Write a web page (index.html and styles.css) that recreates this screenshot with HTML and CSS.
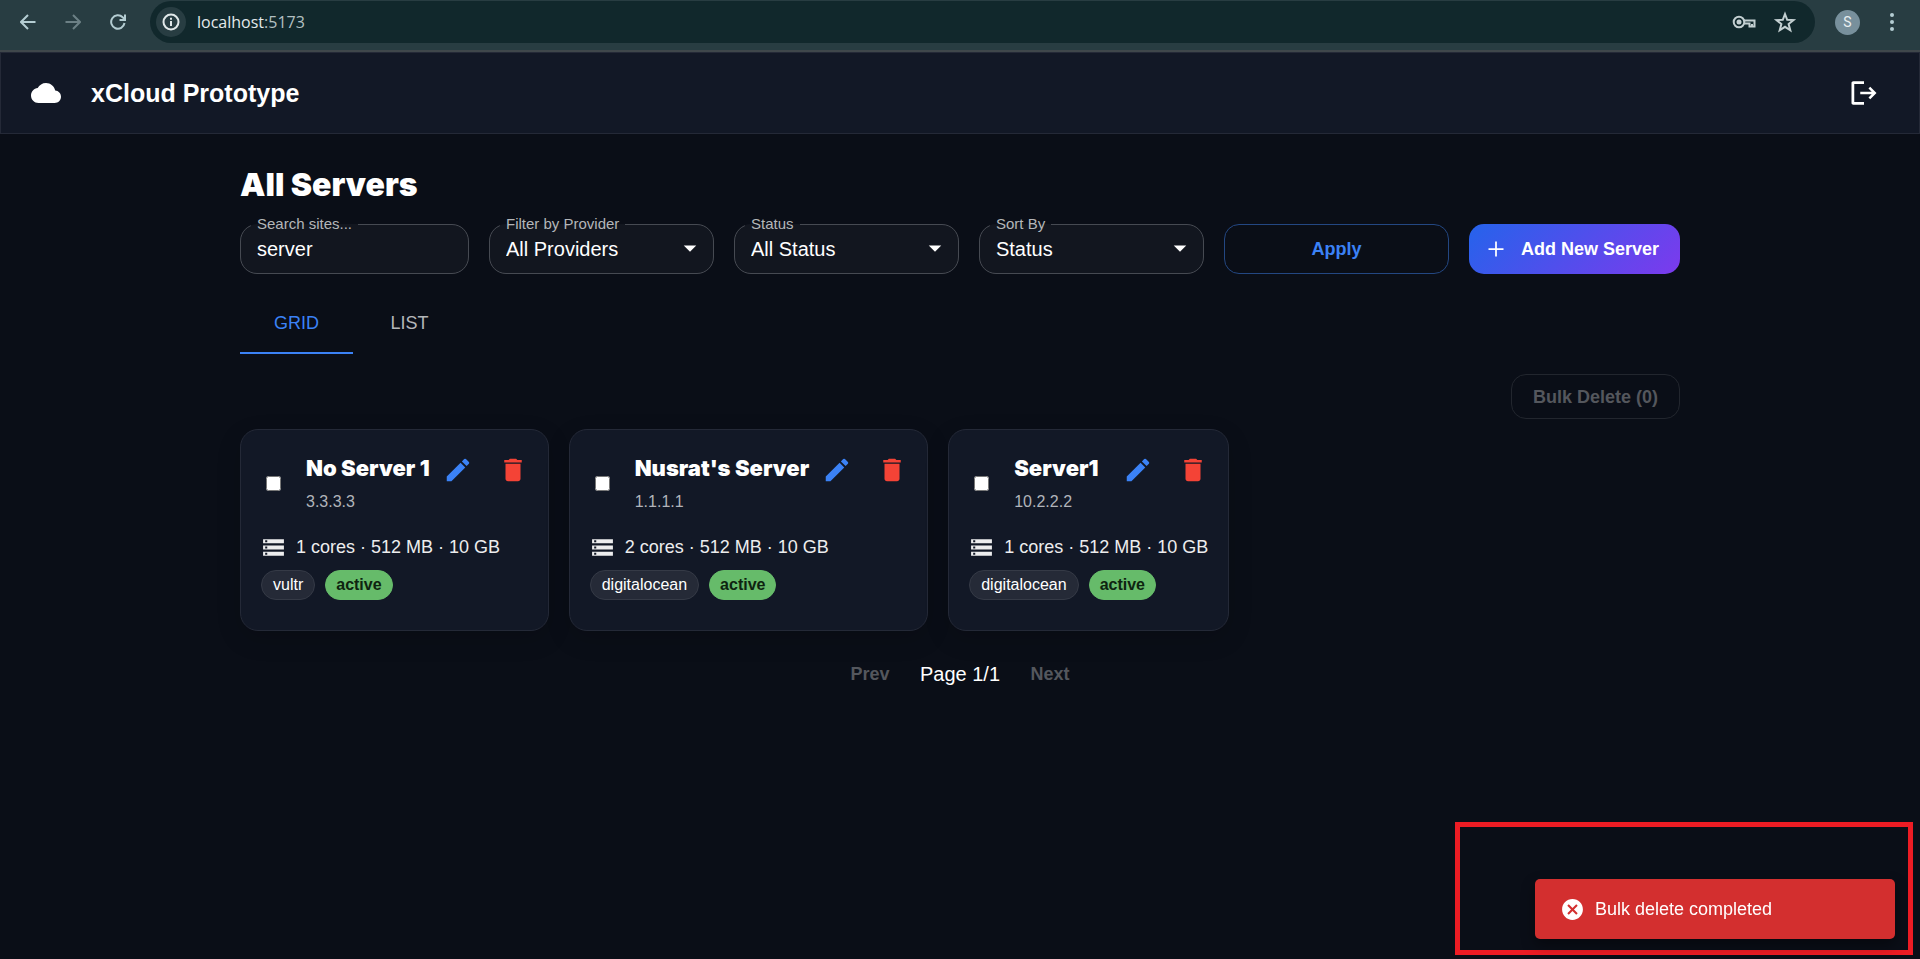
FILE: index.html
```html
<!DOCTYPE html>
<html lang="en">
<head>
<meta charset="utf-8">
<meta name="viewport" content="width=device-width, initial-scale=1">
<title>xCloud Prototype</title>
<link rel="stylesheet" href="styles.css">
</head>
<body>
<svg class="sprite" aria-hidden="true">
  <symbol id="edit" viewBox="0 0 24 24"><path d="M3 17.25V21h3.75L17.81 9.94l-3.75-3.75zM20.71 7.04c.39-.39.39-1.02 0-1.41l-2.34-2.34a.9959.9959 0 0 0-1.41 0l-1.83 1.83 3.75 3.75z"/></symbol>
  <symbol id="trash" viewBox="0 0 24 24"><path d="M6 19c0 1.100.9 2 2 2h8c1.100 0 2-.9 2-2V7H6zM19 4h-3.500l-1-1h-5l-1 1H5v2h14z"/></symbol>
  <symbol id="storage" viewBox="0 0 24 24"><path d="M2 20h20v-4H2zm2-3h2v2H4zM2 4v4h20V4zm4 3H4V5h2zm-4 7h20v-4H2zm2-3h2v2H4z"/></symbol>
  <symbol id="caret" viewBox="0 0 24 24"><path d="m7 10 5 5 5-5z"/></symbol>
</svg>

<div class="browser">
  <button class="nav" aria-label="Back"><svg viewBox="0 0 16 16"><path d="M15.500 8H1.500M8 1 1 8l7 7"/></svg></button>
  <button class="nav nav-off" aria-label="Forward" disabled><svg viewBox="0 0 16 16"><path d="M.5 8h14M8 1l7 7-7 7"/></svg></button>
  <button class="nav" aria-label="Reload"><svg viewBox="0 0 16 16"><path d="M14.500 9A6.700 6.700 0 1 1 12.700 3.300L15 5.500M15 .5v5.500H9.500"/></svg></button>
  <div class="omnibox">
    <button class="site-info" aria-label="Site information"><svg viewBox="0 0 18 18"><circle cx="9" cy="9" r="7.500"/><path d="M9 8v5M9 4.800v2"/></svg></button>
    <div class="url">localhost<span>:5173</span></div>
    <button class="tool" aria-label="Passwords"><svg viewBox="0 0 24 16"><circle cx="7" cy="8" r="5.300"/><circle class="solid" cx="7" cy="8" r="2.500"/><path d="M11.500 6.500H22.500v6h-5v-3h-5.500M20 12.500v-2.500"/></svg></button>
    <button class="tool" aria-label="Bookmark"><svg viewBox="0 0 24 24"><path d="m12 4 2.200 5.800 6.300.3-4.900 4 1.700 6.200L12 16.800 6.700 20.300l1.700-6.200-4.900-4 6.300-.3z"/></svg></button>
  </div>
  <button class="profile" aria-label="Profile">S</button>
  <button class="menu" aria-label="Menu"><svg viewBox="0 0 6 20"><circle cx="3" cy="3" r="2"/><circle cx="3" cy="10" r="2"/><circle cx="3" cy="17" r="2"/></svg></button>
</div>

<header class="appbar">
  <svg class="icon" viewBox="0 0 24 24"><path d="M19.350 10.040C18.670 6.590 15.640 4 12 4 9.110 4 6.600 5.640 5.350 8.040 2.340 8.360 0 10.910 0 14c0 3.310 2.690 6 6 6h13c2.760 0 5-2.240 5-5 0-2.640-2.050-4.780-4.650-4.960"/></svg>
  <h1>xCloud Prototype</h1>
  <button class="icon-btn" aria-label="Log out"><svg class="icon" viewBox="0 0 24 24"><path d="m17 7-1.410 1.410L18.170 11H9v2h9.170l-2.580 2.580L17 17l5-5zM4.200 4.800H12V2.600H3.500C2.600 2.600 2 3.200 2 4v16c0 .8.600 1.400 1.500 1.400H12v-2.200H4.200z"/></svg></button>
</header>

<main class="content">
  <h2 class="black">All Servers</h2>
  <form class="filters">
    <fieldset class="field search"><legend><label for="search">Search sites...</label></legend><input id="search" type="text" value="server"></fieldset>
    <fieldset class="field"><legend><label for="provider">Filter by Provider</label></legend><select id="provider"><option>All Providers</option></select><svg class="icon caret"><use href="#caret"/></svg></fieldset>
    <fieldset class="field"><legend><label for="status">Status</label></legend><select id="status"><option>All Status</option></select><svg class="icon caret"><use href="#caret"/></svg></fieldset>
    <fieldset class="field"><legend><label for="sort">Sort By</label></legend><select id="sort"><option>Status</option></select><svg class="icon caret"><use href="#caret"/></svg></fieldset>
    <button type="button" class="btn apply">Apply</button>
    <button type="button" class="btn add"><svg class="icon" viewBox="0 0 24 24"><path d="M18 12.700h-5.300V18h-1.400v-5.300H6v-1.400h5.300V6h1.400v5.300H18z"/></svg>Add New Server</button>
  </form>

  <div class="tabs" role="tablist">
    <button class="tab tab-on" role="tab" aria-selected="true">GRID</button>
    <button class="tab" role="tab" aria-selected="false">LIST</button>
  </div>

  <button class="btn bulk" disabled>Bulk Delete (0)</button>

  <section class="cards">
    <article class="card">
      <div class="card-head">
        <input type="checkbox" aria-label="Select No Server 1">
        <div class="card-title"><h3 class="black">No Server 1</h3><p>3.3.3.3</p></div>
        <div class="actions">
          <button class="icon-btn edit" aria-label="Edit"><svg class="icon"><use href="#edit"/></svg></button>
          <button class="icon-btn delete" aria-label="Delete"><svg class="icon"><use href="#trash"/></svg></button>
        </div>
      </div>
      <p class="specs"><svg class="icon"><use href="#storage"/></svg>1 cores · 512 MB · 10 GB</p>
      <div class="chips"><span class="chip">vultr</span><span class="chip active">active</span></div>
    </article>
    <article class="card">
      <div class="card-head">
        <input type="checkbox" aria-label="Select Nusrat's Server">
        <div class="card-title"><h3 class="black">Nusrat's Server</h3><p>1.1.1.1</p></div>
        <div class="actions">
          <button class="icon-btn edit" aria-label="Edit"><svg class="icon"><use href="#edit"/></svg></button>
          <button class="icon-btn delete" aria-label="Delete"><svg class="icon"><use href="#trash"/></svg></button>
        </div>
      </div>
      <p class="specs"><svg class="icon"><use href="#storage"/></svg>2 cores · 512 MB · 10 GB</p>
      <div class="chips"><span class="chip">digitalocean</span><span class="chip active">active</span></div>
    </article>
    <article class="card">
      <div class="card-head">
        <input type="checkbox" aria-label="Select Server1">
        <div class="card-title"><h3 class="black">Server1</h3><p>10.2.2.2</p></div>
        <div class="actions">
          <button class="icon-btn edit" aria-label="Edit"><svg class="icon"><use href="#edit"/></svg></button>
          <button class="icon-btn delete" aria-label="Delete"><svg class="icon"><use href="#trash"/></svg></button>
        </div>
      </div>
      <p class="specs"><svg class="icon"><use href="#storage"/></svg>1 cores · 512 MB · 10 GB</p>
      <div class="chips"><span class="chip">digitalocean</span><span class="chip active">active</span></div>
    </article>
  </section>

  <nav class="pager">
    <button class="btn" disabled>Prev</button>
    <span>Page 1/1</span>
    <button class="btn" disabled>Next</button>
  </nav>
</main>

<div class="highlight"></div>
<div class="toast" role="alert">
  <svg class="icon" viewBox="0 0 24 24"><path d="M12 2C6.470 2 2 6.470 2 12s4.470 10 10 10 10-4.470 10-10S17.530 2 12 2m5 13.590L15.590 17 12 13.410 8.410 17 7 15.590 10.590 12 7 8.410 8.410 7 12 10.590 15.590 7 17 8.410 13.410 12z"/></svg>
  Bulk delete completed
</div>
</body>
</html>
```

FILE: styles.css
```css
* { box-sizing: border-box; }

body {
  margin: 0;
  min-height: 100vh;
  background: #0a0e17;
  color: #fff;
  font-family: "Liberation Sans", Arial, sans-serif;
  font-size: 20px;
  line-height: 30px;
}

h1, h2, h3, p { margin: 0; }

button {
  padding: 0;
  border: 0;
  background: none;
  color: inherit;
  font: inherit;
}

.sprite { display: none; }

.icon {
  display: block;
  flex: none;
  width: 30px;
  height: 30px;
  fill: currentColor;
}

.black {
  font-family: Inter, "Liberation Sans", sans-serif;
  font-weight: 900;
}

/* Browser toolbar */
.browser {
  display: flex;
  align-items: center;
  height: 52px;
  padding: 1px 25px 7px 20px;
  background: #283d42;
  border-bottom: 2px solid #3f474b;
}

.browser svg {
  display: block;
  fill: none;
  stroke: currentColor;
  stroke-width: 2;
}

.nav {
  width: 16px;
  margin-right: 29px;
  color: #b4cdd2;
}

.nav svg { width: 16px; height: 16px; }
.nav-off { color: #6c8085; }

.omnibox {
  display: flex;
  flex: 1;
  align-items: center;
  height: 42px;
  margin-right: 20px;
  margin-left: -5px;
  padding: 0 18px 0 6px;
  border-radius: 21px;
  background: #11282c;
  color: #c3cfd1;
}

.site-info {
  display: grid;
  place-items: center;
  width: 30px;
  height: 30px;
  border-radius: 50%;
  background: #283d42;
  color: #e1e8e9;
}

.site-info svg { width: 18px; height: 18px; }

.url {
  flex: 1;
  margin-left: 11px;
  color: #e4eaeb;
  font-family: "Open Sans", "Noto Sans", sans-serif;
  font-size: 16px;
  line-height: 24px;
}

.url span { color: #b3c0c2; }

.tool { margin-left: 17px; }
.tool svg { width: 24px; height: 24px; }

.browser .solid { fill: currentColor; stroke: none; }

.profile {
  width: 25px;
  height: 25px;
  border-radius: 50%;
  background: #78909c;
  color: #e9eef0;
  font-family: Roboto, sans-serif;
  font-size: 14px;
  line-height: 25px;
}

.menu { margin-left: 29px; color: #b4cdd2; }
.browser .menu svg { width: 6px; height: 20px; fill: currentColor; stroke: none; }

/* Application bar */
.appbar {
  display: flex;
  align-items: center;
  gap: 30px;
  padding: 15px 30px;
  border: 1px solid #242937;
  background: #121826;
}

.appbar h1 {
  flex: 1;
  font-size: 25px;
  line-height: 30px;
}

.icon-btn { padding: 10px; }

/* Page content */
.content {
  display: flex;
  flex-direction: column;
  max-width: 1500px;
  margin: 0 auto;
  padding: 30px;
}

.content h2 {
  font-size: 32px;
  line-height: 42px;
}

.filters {
  display: flex;
  align-items: flex-end;
  gap: 20px;
  margin-top: 8px;
}

.field {
  position: relative;
  flex: 1 1 225px;
  min-width: 0;
  height: 60px;
  margin: 0;
  padding: 0 10px;
  border: 1px solid #464a52;
  border-radius: 17px;
  background: #12161f;
}

.search { flex-basis: 229px; }

.field legend {
  padding: 0 6px;
  color: #b4b6b9;
  font-size: 15px;
  line-height: 20px;
}

.field label { display: block; }

.field input,
.field select {
  display: block;
  width: 100%;
  height: 30px;
  padding: 0 6px;
  border: 0;
  outline: 0;
  background: transparent;
  color: #fff;
  font: inherit;
  appearance: none;
}

.field .caret {
  position: absolute;
  right: 8px;
  bottom: 10px;
  pointer-events: none;
}

.btn {
  height: 45px;
  min-width: 80px;
  border-radius: 15px;
  font-size: 18px;
  font-weight: 700;
}

.btn:disabled { color: #54575d; }

.apply {
  flex: 1 1 225px;
  height: 50px;
  border: 1px solid #234782;
  color: #3b82f6;
}

.add {
  display: flex;
  flex: none;
  align-items: center;
  gap: 10px;
  height: 50px;
  padding: 0 21px 0 12px;
  background: linear-gradient(135deg, #2563eb, #7c3aed);
  white-space: nowrap;
}

.tabs {
  display: flex;
  margin-top: 20px;
}

.tab {
  width: 113px;
  height: 60px;
  border-bottom: 2px solid transparent;
  color: #b4b6b9;
  font-size: 18px;
}

.tab-on {
  border-color: #3b82f6;
  color: #3b82f6;
}

.bulk {
  align-self: flex-end;
  margin-top: 20px;
  padding: 0 21px;
  border: 1px solid #22262e;
}

/* Server cards */
.cards {
  display: flex;
  flex-wrap: wrap;
  gap: 20px;
  margin-top: 10px;
}

.card {
  padding: 20px 20px 30px;
  border: 1px solid #242937;
  border-radius: 18px;
  background: #121826;
  box-shadow: 0 8px 24px rgba(0, 0, 0, 0.15);
}

.card-head {
  display: flex;
  align-items: center;
  padding-bottom: 18px;
}

.card-head input {
  width: 15px;
  height: 15px;
  margin: 0 25px 0 5px;
}

.card-title {
  flex: 1;
  padding-right: 3px;
}

.card h3 {
  font-size: 22px;
  line-height: 36px;
}

.card-title p {
  color: #b1b4ba;
  font-size: 16px;
  line-height: 31px;
}

.actions {
  display: flex;
  align-self: flex-start;
  gap: 5px;
  margin: -5px -10px -5px 0;
}

.edit { color: #3b82f6; }
.delete { color: #f44336; }

.specs {
  display: flex;
  align-items: center;
  gap: 10px;
  color: #ededee;
  font-size: 18px;
  line-height: 25px;
}

.specs .icon,
.toast .icon {
  width: 25px;
  height: 25px;
}

.chips {
  display: flex;
  gap: 10px;
  margin-top: 10px;
}

.chip {
  padding: 0 11px;
  border: 1px solid #353a46;
  border-radius: 15px;
  background: #252a37;
  font-size: 16px;
  line-height: 28px;
}

.chip.active {
  padding: 0 10px;
  border-color: #66bb6a;
  background: #66bb6a;
  color: #0e2410;
  font-weight: 700;
}

.pager {
  display: flex;
  align-items: center;
  justify-content: center;
  gap: 10px;
  margin-top: 20px;
}

/* Overlays */
.highlight {
  position: fixed;
  right: 7px;
  bottom: 4px;
  width: 458px;
  height: 133px;
  border: 5px solid #ed1c24;
}

.toast {
  position: fixed;
  right: 25px;
  bottom: 20px;
  display: flex;
  align-items: center;
  gap: 10px;
  width: 360px;
  height: 60px;
  padding: 0 25px;
  border-radius: 5px;
  background: #d32f2f;
  box-shadow: 0 6px 14px rgba(0, 0, 0, 0.4);
  font-size: 18px;
}
```
